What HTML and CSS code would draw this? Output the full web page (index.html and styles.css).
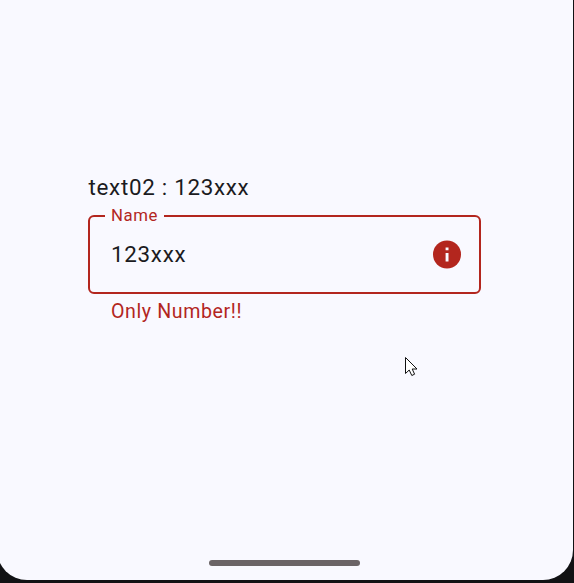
FILE: index.html
```html
<!DOCTYPE html>
<html lang="en">
<head>
<meta charset="utf-8">
<title>Text field</title>
<link rel="stylesheet" href="styles.css">
</head>
<body>
<main class="screen">
  <section class="form">
    <p class="value">text02 : 123xxx</p>
    <fieldset class="field">
      <legend class="label">Name</legend>
      <div class="row">
        <span class="input">123xxx</span>
        <svg class="info" viewBox="0 0 28 29"><circle cx="14" cy="14.5" r="14" fill="#b3261e"/><path d="M12.6 7.5h2.9v2.8h-2.9zM12.6 13h2.9v8.5h-2.9z" fill="#f9f9ff"/></svg>
      </div>
    </fieldset>
    <p class="support">Only Number!!</p>
  </section>
  <div class="handle"></div>
</main>
<svg class="cursor" viewBox="0 0 13 20"><path d="M.5 .5V16.5L4.2 13L6.8 18.5L9.6 17.2L7.2 12H12Z" fill="#fff" stroke="#111" stroke-width="1"/></svg>
</body>
</html>
```
FILE: styles.css
```css
body {
  margin: 0;
  height: 583px;
  overflow: hidden;
  background: #111214;
  font-family: Roboto, sans-serif;
  color: #1b1b21;
}

p {
  margin: 0;
}

.screen {
  display: flex;
  flex-direction: column;
  justify-content: space-between;
  box-sizing: border-box;
  width: 576px;
  height: 580px;
  margin-left: -3px;
  padding: 171px 0 14px 91px;
  border-radius: 0 0 30px 30px;
  background: #f9f9ff;
}

.form {
  width: 393px;
}

.value {
  padding-left: 0.5px;
  font-size: 22.4px;
  line-height: 33px;
  letter-spacing: 0.7px;
}

.field {
  box-sizing: border-box;
  height: 90px;
  min-width: 0;
  margin: 0;
  padding: 0 18px 0 15px;
  border: 2px solid #b3261e;
  border-radius: 6px;
}

.label {
  padding: 0 6px 2px;
  font-size: 16.8px;
  line-height: 22px;
  letter-spacing: 0.56px;
  color: #b3261e;
}

.row {
  display: flex;
  align-items: center;
  justify-content: space-between;
  height: 52px;
  padding-left: 6px;
}

.input {
  font-size: 22.4px;
  letter-spacing: 0.7px;
}

.info {
  width: 28px;
  height: 29px;
}

.support {
  padding: 6px 0 0 23px;
  font-size: 19.6px;
  line-height: 24px;
  letter-spacing: 0.6px;
  color: #b3261e;
}

.handle {
  width: 151px;
  height: 6px;
  margin-left: 121px;
  border-radius: 3px;
  background: #6b6466;
}

.cursor {
  position: absolute;
  left: 405px;
  top: 357px;
  width: 13px;
  height: 20px;
}
```
